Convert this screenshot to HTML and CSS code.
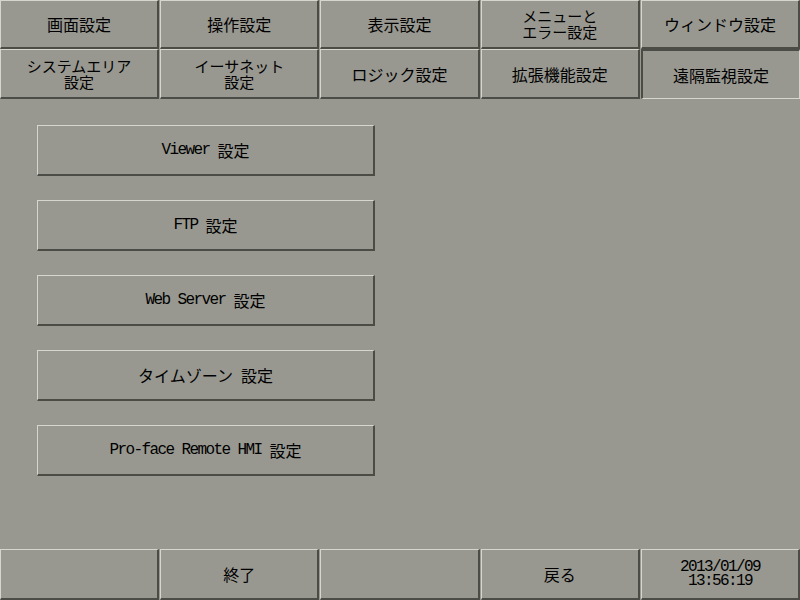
FILE: index.html
```html
<!DOCTYPE html>
<html lang="ja">
<head>
    <meta charset="UTF-8">
    <title>遠隔監視設定</title>
    <link rel="stylesheet" href="styles.css">
</head>
<body>
    <div class="screen">
        <!-- Settings category tabs -->
        <nav class="tabs">
            <div class="tab">画面設定</div>
            <div class="tab">操作設定</div>
            <div class="tab">表示設定</div>
            <div class="tab two-line">メニューと<br>エラー設定</div>
            <div class="tab">ウィンドウ設定</div>
            <div class="tab two-line">システムエリア<br>設定</div>
            <div class="tab two-line">イーサネット<br>設定</div>
            <div class="tab">ロジック設定</div>
            <div class="tab">拡張機能設定</div>
            <div class="tab active">遠隔監視設定</div>
        </nav>

        <main class="menu">
            <div class="menu-btn"><span class="latin">Viewer </span>設定</div>
            <div class="menu-btn"><span class="latin">FTP </span>設定</div>
            <div class="menu-btn"><span class="latin">Web Server </span>設定</div>
            <div class="menu-btn">タイムゾーン<span class="latin"> </span>設定</div>
            <div class="menu-btn"><span class="latin">Pro-face Remote HMI </span>設定</div>
        </main>

        <!-- Bottom command bar -->
        <footer class="bar">
            <div class="tab"></div>
            <div class="tab">終了</div>
            <div class="tab"></div>
            <div class="tab">戻る</div>
            <div class="tab clock"><span class="latin">2013/01/09<br>13:56:19</span></div>
        </footer>
    </div>
</body>
</html>
```

FILE: styles.css
```css
/* Panel colours */
body {
    margin: 0;
    background: #989890;
    color: #000;
    font-family: "Noto Sans CJK JP", sans-serif;
    font-size: 16px;
}

.screen {
    display: flex;
    flex-direction: column;
    width: 800px;
    height: 600px;
}

/* Raised button look shared by tabs and bar keys */
.tab,
.menu-btn {
    box-sizing: border-box;
    display: flex;
    align-items: center;
    justify-content: center;
    text-align: center;
    line-height: 16px;
    border-top: 1px solid #d6d6ce;
    border-left: 1px solid #d6d6ce;
    border-bottom: 2px solid #4c4c46;
    border-right: 2px solid #4c4c46;
}

.tabs {
    display: grid;
    grid-template-columns: repeat(5, 1fr);
    grid-template-rows: 49px 50px;
    column-gap: 1px;
}

.tab.two-line {
    font-size: 15px;
}

.tab.active {
    border-top: 2px solid #4c4c46;
    border-left: 2px solid #4c4c46;
    border-bottom: 1px solid #d6d6ce;
    border-right: 1px solid #d6d6ce;
}

/* Sub-setting buttons */
.menu {
    flex: 1;
    display: flex;
    flex-direction: column;
    gap: 24px;
    padding: 26px 0 0 37px;
}

.menu-btn {
    width: 338px;
    height: 51px;
}

/* Narrow half-width latin text */
.latin {
    font-family: "Liberation Mono", monospace;
    font-size: 16px;
    letter-spacing: -1.6px;
    white-space: pre;
}

.menu-btn .latin {
    vertical-align: -2px;
}

.bar {
    display: grid;
    grid-template-columns: repeat(5, 1fr);
    column-gap: 1px;
    height: 51px;
}

.clock .latin {
    line-height: 14px;
}
```
